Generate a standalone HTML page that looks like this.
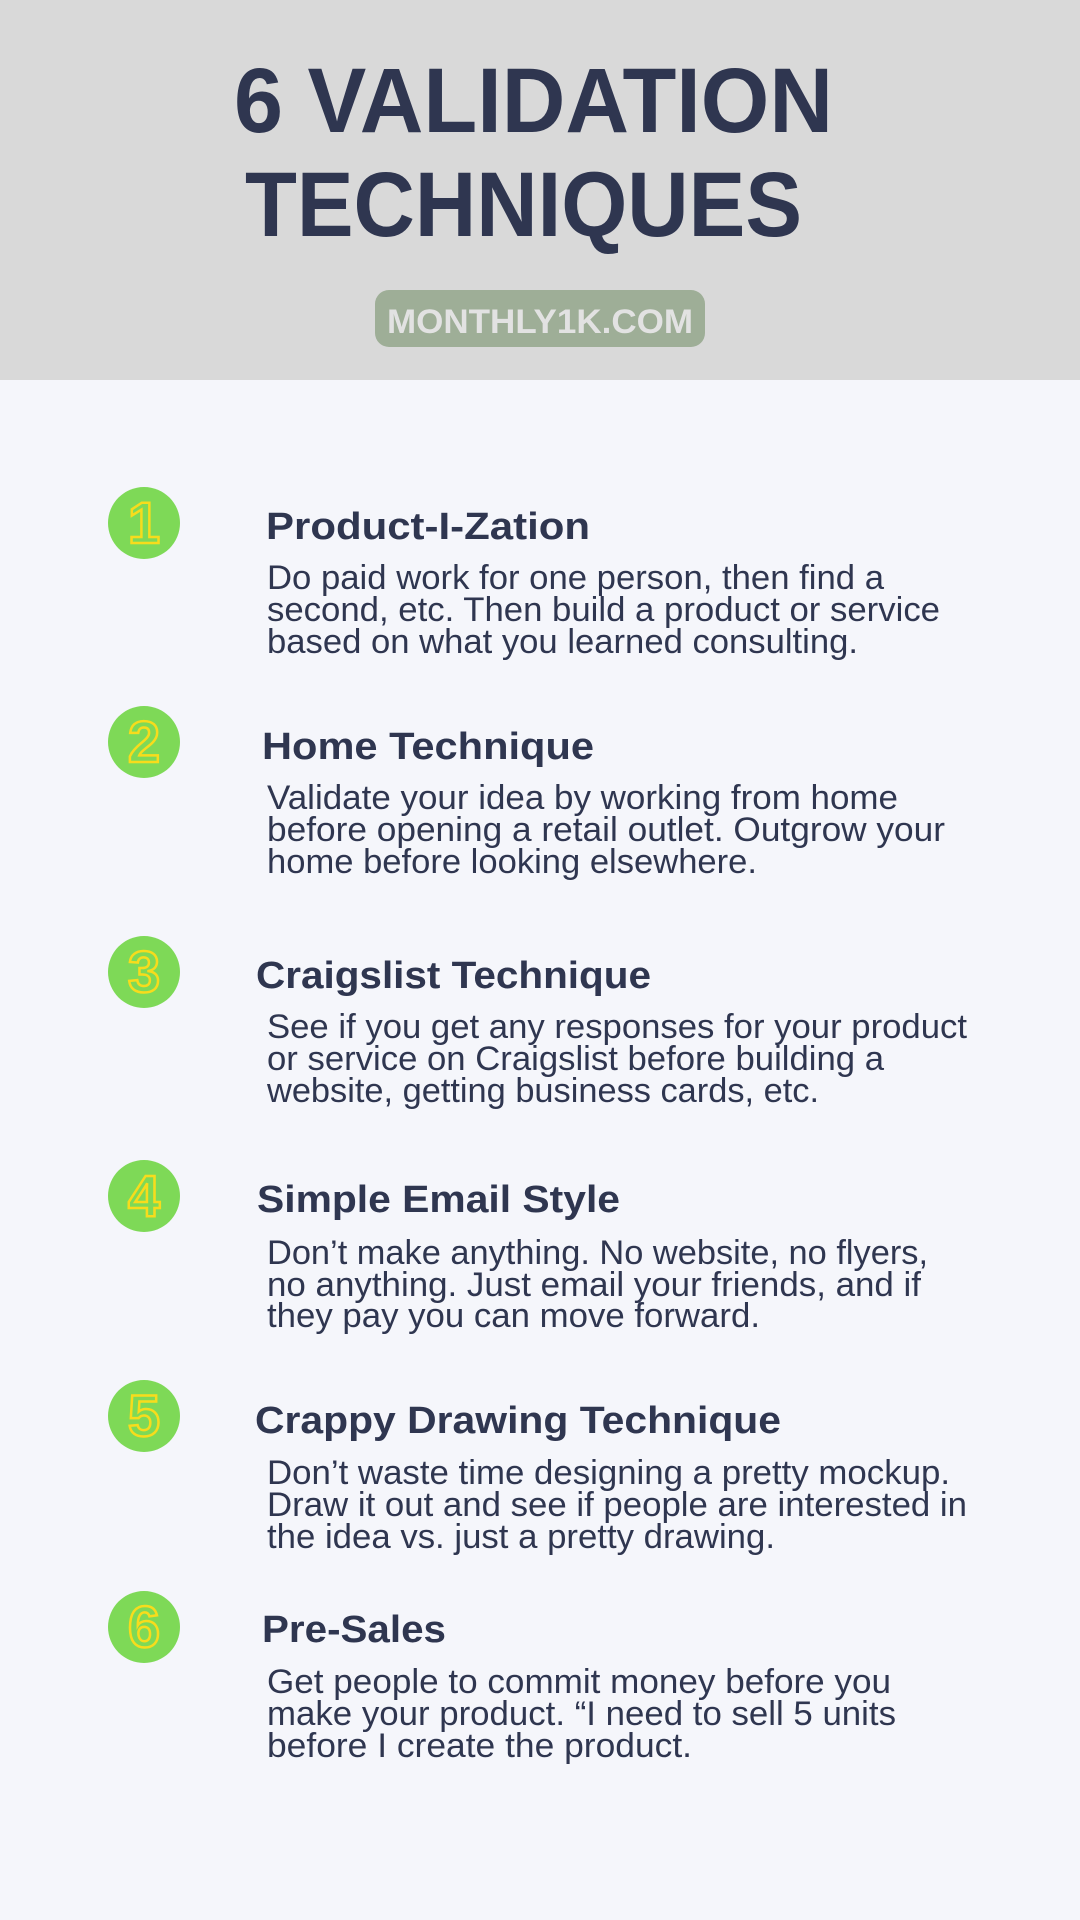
<!DOCTYPE html>
<html><head><meta charset="utf-8"><style>
html,body{margin:0;padding:0;width:1080px;height:1920px;overflow:hidden;background:#f5f6fb;}
svg{display:block;}
.t{font-family:"Liberation Sans",sans-serif;font-weight:bold;fill:#2f3650;}
.b{font-family:"Liberation Sans",sans-serif;fill:#2f3650;font-size:34px;}
.n{font-family:"Liberation Sans",sans-serif;font-weight:bold;font-size:58px;fill:none;stroke:#f7dc1c;stroke-width:2.5px;}
</style></head><body>
<svg width="1080" height="1920" viewBox="0 0 1080 1920" xmlns="http://www.w3.org/2000/svg">
<rect width="1080" height="380" fill="#d9d9d9"/>
<rect y="380" width="1080" height="1540" fill="#f5f6fb"/>
<text class="t" x="234" y="132" font-size="92" textLength="599" lengthAdjust="spacingAndGlyphs">6 VALIDATION</text>
<text class="t" x="245" y="236" font-size="92" textLength="557" lengthAdjust="spacingAndGlyphs">TECHNIQUES</text>
<rect x="375" y="290" width="330" height="57" rx="14" fill="#9eae97"/>
<text x="387" y="333" font-family="Liberation Sans,sans-serif" font-weight="bold" font-size="34" fill="#e2e2e2" textLength="306" lengthAdjust="spacingAndGlyphs">MONTHLY1K.COM</text>

<g fill="#7ed957">
<circle cx="144" cy="523" r="36"/>
<circle cx="144" cy="742" r="36"/>
<circle cx="144" cy="972" r="36"/>
<circle cx="144" cy="1196" r="36"/>
<circle cx="144" cy="1416" r="36"/>
<circle cx="144" cy="1627" r="36"/>
</g>
<g text-anchor="middle">
<text class="n" x="144" y="543">1</text>
<text class="n" x="144" y="762">2</text>
<text class="n" x="144" y="992">3</text>
<text class="n" x="144" y="1216">4</text>
<text class="n" x="144" y="1436">5</text>
<text class="n" x="144" y="1647">6</text>
</g>

<text class="t" font-size="38" x="266" y="539" textLength="324" lengthAdjust="spacingAndGlyphs">Product-I-Zation</text>
<text class="b" x="267" y="589" textLength="617" lengthAdjust="spacingAndGlyphs">Do paid work for one person, then find a</text>
<text class="b" x="267" y="621" textLength="673" lengthAdjust="spacingAndGlyphs">second, etc. Then build a product or service</text>
<text class="b" x="267" y="653" textLength="591" lengthAdjust="spacingAndGlyphs">based on what you learned consulting.</text>

<text class="t" font-size="38" x="262" y="759" textLength="332" lengthAdjust="spacingAndGlyphs">Home Technique</text>
<text class="b" x="267" y="809" textLength="631" lengthAdjust="spacingAndGlyphs">Validate your idea by working from home</text>
<text class="b" x="267" y="841" textLength="678" lengthAdjust="spacingAndGlyphs">before opening a retail outlet. Outgrow your</text>
<text class="b" x="267" y="873" textLength="490" lengthAdjust="spacingAndGlyphs">home before looking elsewhere.</text>

<text class="t" font-size="38" x="256" y="988" textLength="395" lengthAdjust="spacingAndGlyphs">Craigslist Technique</text>
<text class="b" x="267" y="1038" textLength="700" lengthAdjust="spacingAndGlyphs">See if you get any responses for your product</text>
<text class="b" x="267" y="1070" textLength="617" lengthAdjust="spacingAndGlyphs">or service on Craigslist before building a</text>
<text class="b" x="267" y="1102" textLength="552" lengthAdjust="spacingAndGlyphs">website, getting business cards, etc.</text>

<text class="t" font-size="38" x="257" y="1212" textLength="363" lengthAdjust="spacingAndGlyphs">Simple Email Style</text>
<text class="b" x="267" y="1264" textLength="661" lengthAdjust="spacingAndGlyphs">Don’t make anything. No website, no flyers,</text>
<text class="b" x="267" y="1296" textLength="654" lengthAdjust="spacingAndGlyphs">no anything. Just email your friends, and if</text>
<text class="b" x="267" y="1327" textLength="493" lengthAdjust="spacingAndGlyphs">they pay you can move forward.</text>

<text class="t" font-size="38" x="255" y="1433" textLength="526" lengthAdjust="spacingAndGlyphs">Crappy Drawing Technique</text>
<text class="b" x="267" y="1484" textLength="683" lengthAdjust="spacingAndGlyphs">Don’t waste time designing a pretty mockup.</text>
<text class="b" x="267" y="1516" textLength="700" lengthAdjust="spacingAndGlyphs">Draw it out and see if people are interested in</text>
<text class="b" x="267" y="1548" textLength="508" lengthAdjust="spacingAndGlyphs">the idea vs. just a pretty drawing.</text>

<text class="t" font-size="38" x="262" y="1642" textLength="184" lengthAdjust="spacingAndGlyphs">Pre-Sales</text>
<text class="b" x="267" y="1693" textLength="624" lengthAdjust="spacingAndGlyphs">Get people to commit money before you</text>
<text class="b" x="267" y="1725" textLength="629" lengthAdjust="spacingAndGlyphs">make your product. “I need to sell 5 units</text>
<text class="b" x="267" y="1757" textLength="425" lengthAdjust="spacingAndGlyphs">before I create the product.</text>
</svg>
</body></html>
